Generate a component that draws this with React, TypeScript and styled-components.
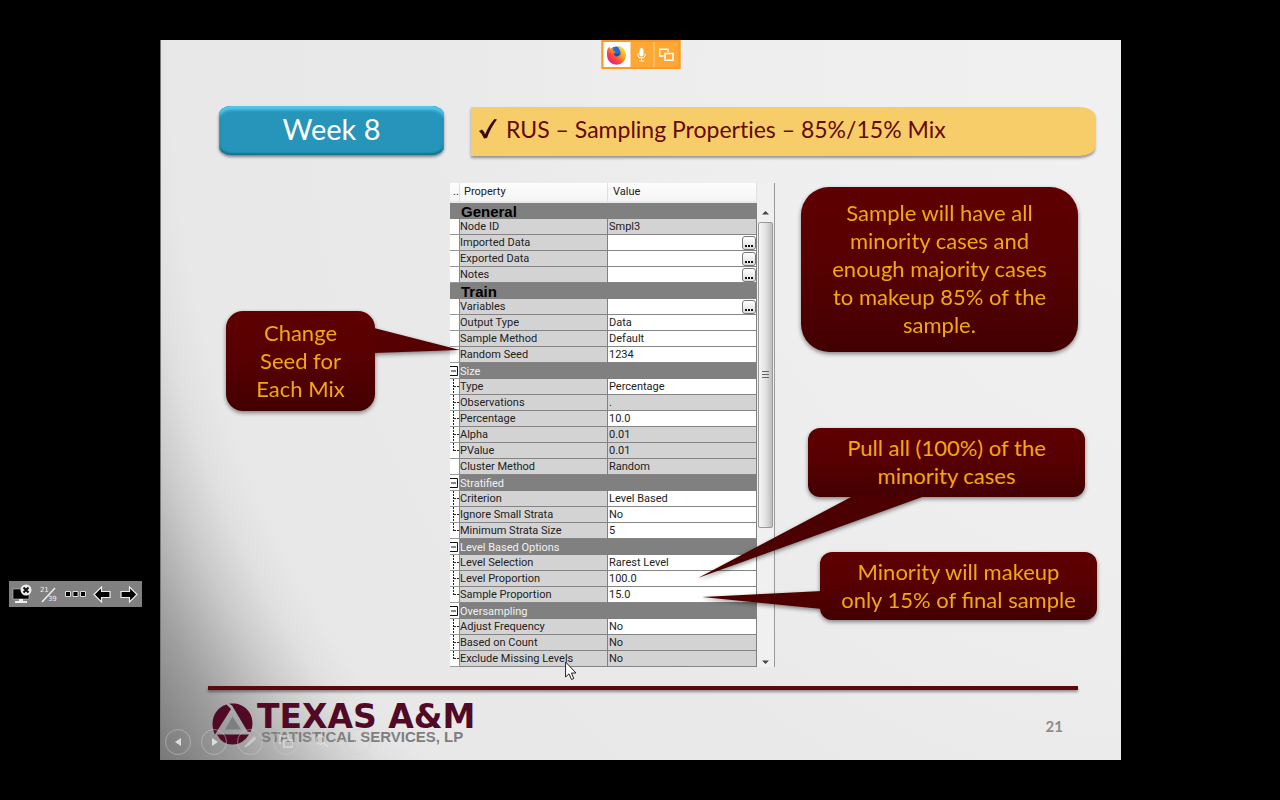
import React from "react";
import styled, { createGlobalStyle } from "styled-components";

const GlobalStyle = createGlobalStyle`
  * { box-sizing: border-box; }
  body { margin: 0; background: #000; }
  button { padding: 0; border: 0; background: none; font: inherit; cursor: pointer; }
  svg { display: block; }
`;

const Stage = styled.main`
  position: relative;
  min-height: 100vh;
  padding: 40px 159px 40px 160px;
  background: #000;
  font-family: Lato, "Liberation Sans", sans-serif;
`;

const Slide = styled.section`
  position: relative;
  display: flex;
  flex-direction: column;
  min-height: 720px;
  min-width: 940px;
  padding: 66px 0 15px;
  box-shadow: inset 1px 0 #777;
  background: radial-gradient(circle at 1050px 36px, #f1f1f1 0, #eeeeee 500px, #e9e9e9 800px, #e8e8e8 1040px, #e0e0e0 1075px, #cbcbcb 1115px, #9e9e9e 1180px, #747474 1260px);
`;

const TitleRow = styled.header`
  display: flex;
  gap: 27px;
  padding: 0 26px 0 59px;
`;

const WeekBadge = styled.div`
  flex: 0 0 225px;
  height: 49px;
  border-radius: 12px / 9px;
  background: #2795b9;
  box-shadow: inset 0 4px 3px #53c7ea, inset 0 -2px 2px #18708e, inset 2px 0 2px #1f86a8, inset -2px 0 2px #1f86a8, 0 2px 3px rgba(0, 0, 0, 0.45);
  color: #fff;
  font-size: 29px;
  line-height: 46px;
  text-align: center;
`;

const Banner = styled.h1`
  display: flex;
  flex: 1;
  align-items: center;
  gap: 9px;
  height: 49px;
  margin: 1px 0 0;
  padding: 0 8px 6px;
  border-radius: 0 16px 16px 0 / 0 9px 9px 0;
  background: #f6cd69;
  box-shadow: 0 2px 3px rgba(0, 0, 0, 0.4);
  color: #640808;
  font-size: 23px;
  font-weight: 400;
  font-variant-ligatures: none;
  white-space: nowrap;
`;

const Body = styled.div`
  display: grid;
  grid-template-columns: 290px 325px 1fr;
  margin-top: 27px;
`;

const LeftNotes = styled.aside`
  padding: 128px 75px 0 66px;
`;

const RightNotes = styled.aside`
  display: flex;
  flex-direction: column;
  align-items: flex-start;
  padding: 4px 0 0 26px;
`;

const Callout = styled.div<{ $h: number; $radius: number; $gap?: number; $indent?: number; $wide?: boolean }>`
  position: relative;
  z-index: 1;
  display: flex;
  align-items: center;
  justify-content: center;
  width: ${(p) => (p.$wide ? "277px" : "149px")};
  height: ${(p) => p.$h}px;
  margin-top: ${(p) => p.$gap ?? 0}px;
  margin-left: ${(p) => p.$indent ?? 0}px;
  border-radius: ${(p) => p.$radius}px;
  background: linear-gradient(#5f0002, #560001 50%, #430001);
  filter: drop-shadow(0 2px 2px rgba(0, 0, 0, 0.45));
  color: #f3a712;
  font-size: 22px;
  line-height: 28px;
  text-align: center;
  white-space: nowrap;

  p { margin: 0 0 1px; }
`;

const Tail = styled.svg<{ $left: number; $top: number }>`
  position: absolute;
  left: ${(p) => p.$left}px;
  top: ${(p) => p.$top}px;
`;

const GridPanel = styled.div`
  display: flex;
  height: 484px;
  border-right: 1px solid #9a9a9a;
`;

const PropertyTable = styled.table`
  width: 307px;
  table-layout: fixed;
  border-collapse: separate;
  border-spacing: 0;
  color: #222;
  font-family: Roboto, "DejaVu Sans", sans-serif;
  font-size: 11px;
  line-height: 15px;
  white-space: nowrap;

  th, td { padding: 0; text-align: left; font-weight: 400; }
`;

const HeadCell = styled.th<{ $pad: number }>`
  height: 20px;
  && { padding: 0 0 2px ${(p) => p.$pad}px; }
  border-right: 1px solid #e0e0e0;
  border-bottom: 2px solid #e9e9e9;
  background: linear-gradient(#fdfdfd, #f4f4f4);
`;

const Gutter = styled.td`
  height: 16px;
  border-right: 1px solid #8a8a8a;
  border-bottom: 1px solid #999;
  background: #fff;
  overflow: hidden;
`;

const NameCell = styled.th`
  height: 16px;
  border-right: 1px solid #808080;
  border-bottom: 1px solid #858585;
  background: #d3d3d3;
`;

const ValueCell = styled.td<{ $locked?: boolean }>`
  height: 16px;
  border-right: 1px solid #808080;
  border-bottom: 1px solid #858585;
  background: ${(p) => (p.$locked ? "#d3d3d3" : "#fff")};
`;

const ValueLine = styled.div`
  display: flex;
  justify-content: space-between;
  height: 15px;
  padding-left: 1px;
`;

const MoreButton = styled.button`
  && {
    width: 14px;
    height: 14px;
    margin-top: 1px;
    border: 1px solid #777;
    border-radius: 3px;
    background: linear-gradient(#fff, #dcdcdc);
  }
`;

const GroupCell = styled.th<{ $major?: boolean }>`
  height: 16px;
  background: #808080;
  color: ${(p) => (p.$major ? "#000" : "#f0f0f0")};
  ${(p) =>
    p.$major &&
    `&& { padding: 2px 0 0 11px; font: bold 15px/14px "Liberation Sans", sans-serif; }`}
`;

const ScrollTrack = styled.div`
  display: flex;
  flex: 1;
  flex-direction: column;
  align-items: center;
  padding: 27px 1px 2px;
  background: #f0f0f0;
`;

const ScrollThumb = styled.div`
  display: flex;
  align-items: center;
  justify-content: center;
  width: 15px;
  height: 306px;
  margin: 7px 0 auto;
  border: 1px solid #999;
  border-radius: 2px;
  background: linear-gradient(90deg, #f6f6f6, #e2e2e2 50%, #bdbdbd);
`;

const Rule = styled.hr`
  flex: none;
  height: 4px;
  margin: 19px 43px 0 48px;
  border: 0;
  background: #5a0a0c;
  box-shadow: 0 2px 3px rgba(0, 0, 0, 0.4);
`;

const Footer = styled.footer`
  display: flex;
  align-items: flex-start;
  justify-content: space-between;
  padding: 13px 58px 0 52px;
`;

const Brand = styled.div`
  display: flex;
  gap: 4px;
`;

const BrandText = styled.div`
  padding-top: 1px;
`;

const BrandName = styled.div`
  color: #500a26;
  font: bold 33px/25px "DejaVu Sans", sans-serif;
  white-space: nowrap;
`;

const BrandLine = styled.div`
  padding-left: 4px;
  color: #7f7f7f;
  font: bold 15px/16px "Liberation Sans", sans-serif;
  white-space: nowrap;
`;

const PageNumber = styled.span`
  padding-top: 14px;
  color: #8b8b8b;
  font-size: 15px;
  font-weight: 700;
  line-height: 18px;
`;

const ShowControls = styled.nav`
  position: absolute;
  bottom: 5px;
  left: 5px;
  display: flex;
  gap: 10px;
`;

const RoundButton = styled.button`
  && {
    display: grid;
    place-items: center;
    width: 26px;
    height: 26px;
    border: 1px solid rgba(205, 205, 205, 0.5);
    border-radius: 50%;
  }
`;

const ShareBar = styled.div`
  position: absolute;
  top: 0;
  left: 50%;
  display: flex;
  width: 79px;
  height: 29px;
  border: 2px solid #fb9a26;
  background: #fda734;
  transform: translateX(-50%);
`;

const ShareItem = styled.button<{ $white?: boolean; $line?: boolean }>`
  && {
    display: grid;
    flex: ${(p) => (p.$white ? "0 0 27px" : "1")};
    place-items: center;
    background: ${(p) => (p.$white ? "#fff" : "none")};
    border-left: ${(p) => (p.$line ? "1px solid #fdd39a" : "0")};
  }
`;

const DockBar = styled.nav`
  position: absolute;
  top: 581px;
  left: 9px;
  display: flex;
  align-items: center;
  width: 133px;
  height: 26px;
  background: #808080;
`;

const DockButton = styled.button`
  && {
    display: grid;
    flex: 1;
    place-items: center;
    height: 26px;
  }
`;

const Fraction = styled.span`
  position: relative;
  display: block;
  width: 20px;
  height: 20px;
  color: #eee;
  font: 7px/8px "DejaVu Sans", sans-serif;

  span { position: absolute; left: 1px; top: 2px; }
  span + span { left: 9px; top: 11px; }
  svg { position: absolute; inset: 0; }
`;

const Pointer = styled.svg`
  position: absolute;
  left: 405px;
  top: 621px;
  z-index: 2;
`;

type Branch = "none" | "mid" | "end";
type Row =
  | { kind: "major" | "group"; name: string }
  | { kind: "prop"; name: string; value?: string; locked?: boolean; more?: boolean; branch?: Branch };

const rows: Row[] = [
  { kind: "major", name: "General" },
  { kind: "prop", name: "Node ID", value: "Smpl3", locked: true },
  { kind: "prop", name: "Imported Data", more: true },
  { kind: "prop", name: "Exported Data", more: true },
  { kind: "prop", name: "Notes", more: true },
  { kind: "major", name: "Train" },
  { kind: "prop", name: "Variables", more: true },
  { kind: "prop", name: "Output Type", value: "Data" },
  { kind: "prop", name: "Sample Method", value: "Default" },
  { kind: "prop", name: "Random Seed", value: "1234" },
  { kind: "group", name: "Size" },
  { kind: "prop", name: "Type", value: "Percentage", branch: "mid" },
  { kind: "prop", name: "Observations", value: ".", locked: true, branch: "mid" },
  { kind: "prop", name: "Percentage", value: "10.0", branch: "mid" },
  { kind: "prop", name: "Alpha", value: "0.01", locked: true, branch: "mid" },
  { kind: "prop", name: "PValue", value: "0.01", locked: true, branch: "end" },
  { kind: "prop", name: "Cluster Method", value: "Random", locked: true },
  { kind: "group", name: "Stratified" },
  { kind: "prop", name: "Criterion", value: "Level Based", branch: "mid" },
  { kind: "prop", name: "Ignore Small Strata", value: "No", branch: "mid" },
  { kind: "prop", name: "Minimum Strata Size", value: "5", branch: "end" },
  { kind: "group", name: "Level Based Options" },
  { kind: "prop", name: "Level Selection", value: "Rarest Level", branch: "mid" },
  { kind: "prop", name: "Level Proportion", value: "100.0", branch: "mid" },
  { kind: "prop", name: "Sample Proportion", value: "15.0", branch: "end" },
  { kind: "group", name: "Oversampling" },
  { kind: "prop", name: "Adjust Frequency", value: "No", branch: "mid" },
  { kind: "prop", name: "Based on Count", value: "No", locked: true, branch: "mid" },
  { kind: "prop", name: "Exclude Missing Levels", value: "No", locked: true, branch: "end" },
];

const BranchLines = ({ end }: { end: boolean }) => (
  <svg width="9" height="15" stroke="#222" fill="none">
    <path d={end ? "M3.5 0V8" : "M3.5 0V15"} strokeDasharray="2 1" />
    <path d="M4 7.5H9" strokeDasharray="2 1" />
  </svg>
);

const CollapseButton = styled.button`
  display: block;
`;

const Collapse = ({ name }: { name: string }) => (
  <CollapseButton aria-label={`Collapse ${name}`}>
    <svg width="9" height="15" stroke="#111" fill="none">
      <path d="M0 3.5H7.5V12.5H0M1 8H6" />
    </svg>
  </CollapseButton>
);

const PropertyRow = ({ row }: { row: Row }) => {
  if (row.kind === "major") {
    return (
      <tr>
        <GroupCell $major colSpan={3}>{row.name}</GroupCell>
      </tr>
    );
  }
  if (row.kind === "group") {
    return (
      <tr>
        <Gutter><Collapse name={row.name} /></Gutter>
        <GroupCell colSpan={2}>{row.name}</GroupCell>
      </tr>
    );
  }
  return (
    <tr>
      <Gutter>{row.branch && <BranchLines end={row.branch === "end"} />}</Gutter>
      <NameCell scope="row">{row.name}</NameCell>
      <ValueCell $locked={row.locked}>
        <ValueLine>
          <span>{row.value}</span>
          {row.more && (
            <MoreButton aria-label={`Edit ${row.name}`}>
              <svg width="12" height="12" fill="#111">
                <path d="M2 8h2v2H2zM5 8h2v2H5zM8 8h2v2H8z" />
              </svg>
            </MoreButton>
          )}
        </ValueLine>
      </ValueCell>
    </tr>
  );
};

const Firefox = () => (
  <svg width="20" height="20" viewBox="0 0 20 20">
    <defs>
      <linearGradient id="fox" x1="0.9" y1="0.1" x2="0.2" y2="0.9">
        <stop offset="0" stopColor="#ffe14a" />
        <stop offset="0.4" stopColor="#ff9a1f" />
        <stop offset="0.75" stopColor="#ff3b45" />
        <stop offset="1" stopColor="#e0218a" />
      </linearGradient>
    </defs>
    <circle cx="10" cy="9.5" r="8" fill="#1d6fd8" />
    <path d="M1 4 3 1.500 4 4C5 3 6 3 7 3.500 6 5 6.500 6 8.500 6.500 9.500 7 8 8 7 8.500 7 11 9 12 11 11.500 13 11 14.500 10 14 7 13.500 5 12 3 11 1 16 1 19.500 5 19.500 10.500A9.500 9.300 0 0 1 .5 10.500C.4 8 .5 6 1 4Z" fill="url(#fox)" />
    <path d="M7 8.500c2 1.500 4 1 6-.5-.5 3-3.500 4-6 .5Z" fill="#25357f" />
  </svg>
);

const Microphone = () => (
  <svg width="10" height="14" viewBox="0 0 10 14" fill="none" stroke="#fff">
    <rect x="3" y="0" width="4" height="8.500" rx="2" fill="#fff" stroke="none" />
    <path d="M1.500 5.500V7.500Q1.500 10 5 10T8.500 7.500V5.500M5 10V13M2.500 13H7.500" />
  </svg>
);

const Screens = () => (
  <svg width="16" height="14" viewBox="0 0 16 14" fill="none" stroke="#fff" strokeWidth="1.500">
    <path d="M5 8H1.200V1.200H9.500V4" />
    <path d="M6.500 5.500H14.500V12.300H6.500Z" />
  </svg>
);

const Emblem = () => (
  <svg width="41" height="42" viewBox="0 0 41 42">
    <g fill="#500a26">
      <path d="M14.500 1.500C7 4 1 10 .5 20Q.5 27 3 31.500L19 6Z" />
      <path d="M17 .8C29 -1.500 40.500 7 40.500 20.500Q40.500 25 38.500 29L35.500 28.500 20 2.500Z" />
      <path d="M5 31.500H37Q31 41.500 20.500 41.500T5 31.500Z" />
    </g>
    <path d="M20.500 13.500 29 26.500H13Z" fill="#7b7f84" />
  </svg>
);

const controls: { label: string; icon: React.ReactNode }[] = [
  { label: "Previous slide", icon: <path d="M10 3 4 7 10 11Z" fill="#ddd" stroke="none" /> },
  { label: "Next slide", icon: <path d="M5 3 11 7 5 11Z" fill="#ddd" stroke="none" /> },
  { label: "Pen", icon: <path d="M2 12 12 2M5 10 12.500 3" /> },
  { label: "All slides", icon: <path d="M1 9V1H9V4M5 5H14V12H5Z" /> },
  { label: "Zoom", icon: <path d="M9 8 13 12M9.500 5A4 4 0 1 1 1.500 5A4 4 0 1 1 9.500 5" /> },
  { label: "More", icon: <path d="M3 7h1M7 7h1M11 7h1" /> },
];

export default function App() {
  return (
    <>
      <GlobalStyle />
      <Stage>
        <Slide>
          <TitleRow>
            <WeekBadge>Week 8</WeekBadge>
            <Banner>
              <svg width="18" height="20" viewBox="0 0 18 20" fill="#3a0808">
                <path d="M0 12 3 10.500Q5 12 6 15.500 10 6 15.500 0L18 .5Q12 8 8 19L5 19.500Q3 14.500 0 12Z" />
              </svg>
              RUS – Sampling Properties – 85%/15% Mix
            </Banner>
          </TitleRow>

          <Body>
            <LeftNotes>
              <Callout $h={100} $radius={17}>
                <Tail $left={148} $top={16} width="87" height="28">
                  <path d="M0 1 86 23 0 26Z" fill="#560001" />
                </Tail>
                <p>Change<br />Seed for<br />Each Mix</p>
              </Callout>
            </LeftNotes>

            <GridPanel>
              <PropertyTable>
                <colgroup>
                  <col width="10" />
                  <col width="148" />
                  <col width="149" />
                </colgroup>
                <thead>
                  <tr>
                    <HeadCell $pad={3}>..</HeadCell>
                    <HeadCell $pad={4}>Property</HeadCell>
                    <HeadCell $pad={5}>Value</HeadCell>
                  </tr>
                </thead>
                <tbody>
                  {rows.map((row) => <PropertyRow key={`${row.kind}-${row.name}`} row={row} />)}
                </tbody>
              </PropertyTable>
              <ScrollTrack>
                <svg width="7" height="5"><path d="M0 4.500 3.500 1 7 4.500Z" fill="#444" /></svg>
                <ScrollThumb>
                  <svg width="7" height="8" stroke="#666"><path d="M0 .5H7M0 3.500H7M0 6.500H7" /></svg>
                </ScrollThumb>
                <svg width="7" height="5"><path d="M0 .5 3.500 4 7 .5Z" fill="#444" /></svg>
              </ScrollTrack>
            </GridPanel>

            <RightNotes>
              <Callout $wide $h={165} $radius={28}>
                <p>Sample will have all<br />minority cases and<br />enough majority cases<br />to makeup 85% of the<br />sample.</p>
              </Callout>
              <Callout $wide $h={69} $radius={12} $gap={76} $indent={7}>
                <Tail $left={-111} $top={68} width="230" height="84">
                  <path d="M156 0H228L1 82Z" fill="#4b0001" />
                </Tail>
                <p>Pull all (100%) of the<br />minority cases</p>
              </Callout>
              <Callout $wide $h={68} $radius={12} $gap={55} $indent={19}>
                <Tail $left={-118} $top={38} width="120" height="20">
                  <path d="M0 7 120 1V19Z" fill="#4e0001" />
                </Tail>
                <p>Minority will makeup<br />only 15% of final sample</p>
              </Callout>
            </RightNotes>
          </Body>

          <Rule />
          <Footer>
            <Brand>
              <Emblem />
              <BrandText>
                <BrandName>TEXAS A&amp;M</BrandName>
                <BrandLine>STATISTICAL SERVICES, LP</BrandLine>
              </BrandText>
            </Brand>
            <PageNumber>21</PageNumber>
          </Footer>

          <ShowControls>
            {controls.map((c) => (
              <RoundButton key={c.label} aria-label={c.label}>
                <svg width="14" height="14" fill="none" stroke="rgba(225,225,225,0.6)" strokeWidth="2">{c.icon}</svg>
              </RoundButton>
            ))}
          </ShowControls>

          <ShareBar>
            <ShareItem $white aria-label="Firefox"><Firefox /></ShareItem>
            <ShareItem aria-label="Microphone"><Microphone /></ShareItem>
            <ShareItem $line aria-label="Shared screens"><Screens /></ShareItem>
          </ShareBar>

          <Pointer width="12" height="20" viewBox="0 0 12 20">
            <path d="M.6 1V16L4 12.800 6.500 18.500 8.800 17.500 6.400 12H11Z" fill="#fff" stroke="#222" />
          </Pointer>
        </Slide>

        <DockBar>
          <DockButton aria-label="End show">
            <svg width="20" height="20" viewBox="0 0 20 20">
              <path d="M1 5H17V15H1Z" fill="#000" stroke="#ddd" strokeWidth="0.500" />
              <path d="M7 15H11V17H15V19H3V17H7Z" fill="#eee" />
              <circle cx="14" cy="6" r="5.500" fill="#eee" />
              <path d="M11.500 3.500 16.500 8.500M16.500 3.500 11.500 8.500" stroke="#111" strokeWidth="2" />
            </svg>
          </DockButton>
          <DockButton aria-label="Slide 21 of 39">
            <Fraction>
              <span>21</span>
              <span>39</span>
              <svg width="20" height="20" stroke="#eee" strokeWidth="1.500"><path d="M3 18 16 4" /></svg>
            </Fraction>
          </DockButton>
          <DockButton aria-label="More options">
            <svg width="21" height="6" fill="#000" stroke="#ddd"><path d="M.5.5h5v5h-5zM8 .5h5v5H8zM15.500 .5h5v5h-5z" /></svg>
          </DockButton>
          <DockButton aria-label="Previous">
            <svg width="18" height="17" fill="#000" stroke="#eee" strokeWidth="1.200"><path d="M1 8.500 8.500 1V5.500H17V11.500H8.500V16Z" /></svg>
          </DockButton>
          <DockButton aria-label="Next">
            <svg width="18" height="17" fill="#000" stroke="#eee" strokeWidth="1.200"><path d="M17 8.500 9.500 1V5.500H1V11.500H9.500V16Z" /></svg>
          </DockButton>
        </DockBar>
      </Stage>
    </>
  );
}
